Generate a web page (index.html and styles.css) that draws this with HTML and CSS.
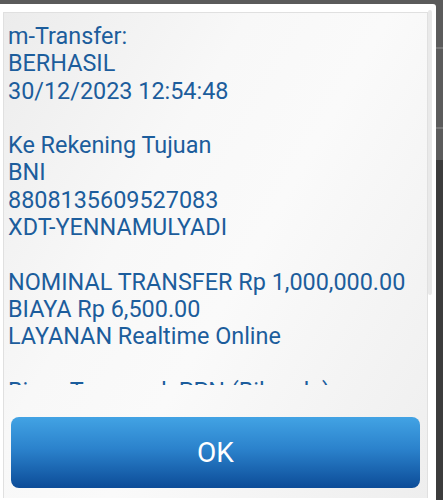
FILE: index.html
```html
<!DOCTYPE html>
<html>
<head>
<meta charset="utf-8">
<link rel="stylesheet" href="styles.css">
</head>
<body>
<div class="screen">
  <div class="dialog">
    <div class="panel">
      <div class="message">
        <p>m-Transfer:<br>BERHASIL<br>30/12/2023 12:54:48<br><br>Ke Rekening Tujuan<br>BNI<br>8808135609527083<br>XDT-YENNAMULYADI<br><br>NOMINAL TRANSFER Rp 1,000,000.00<br>BIAYA Rp 6,500.00<br>LAYANAN Realtime Online<br><br>Biaya Termasuk PPN (Bila ada)<br>Info Lebih Lanjut</p>
      </div>
      <div class="actions">
        <button class="ok">OK</button>
      </div>
      <div class="scroll-thumb"></div>
    </div>
  </div>
</div>
</body>
</html>
```
FILE: styles.css
```css
html, body {
  margin: 0;
  padding: 0;
}
body {
  width: 443px;
  height: 500px;
  overflow: hidden;
  background:
    linear-gradient(#777, #777) 0 47px / 100% 2px no-repeat,
    linear-gradient(#777, #777) 0 127px / 100% 2px no-repeat,
    linear-gradient(#5b5b5b 0, #5b5b5b 160px, #3c3c3c 160px, #3c3c3c 100%);
  font-family: Roboto, "Noto Sans", sans-serif;
}
.screen {
  padding-top: 4px;
  height: 496px;
  box-sizing: border-box;
}
.dialog {
  width: 436px;
  height: 496px;
  background: #fff;
  border-top-right-radius: 3px;
  padding: 8px 8px 0 3px;
  box-sizing: border-box;
}
.panel {
  position: relative;
  height: 485px;
  border: 1px solid #e0e0e0;
  border-bottom: none;
  background: linear-gradient(120deg, #ececec 0%, #f8f8f8 35%, #fafafa 55%, #eeeeee 100%);
  display: flex;
  flex-direction: column;
}
.message {
  height: 372px;
  overflow: hidden;
  padding: 10px 0 0 4px;
  box-sizing: border-box;
}
.message p {
  margin: 0;
  font-size: 23.4px;
  line-height: 27.3px;
  color: #1c5d9c;
}
.actions {
  padding: 32px 7px 0 7px;
}
.ok {
  display: block;
  width: 100%;
  height: 71px;
  border: none;
  border-radius: 8px;
  background: linear-gradient(#42a3e4 0%, #2b82cc 45%, #0c4c98 100%);
  color: #fff;
  font-family: Roboto, "Noto Sans", sans-serif;
  font-size: 28px;
  padding: 0;
}
.scroll-thumb {
  position: absolute;
  right: -5px;
  top: -3px;
  width: 4px;
  height: 285px;
  background: #e9e9e9;
  border-radius: 2px;
}
```
